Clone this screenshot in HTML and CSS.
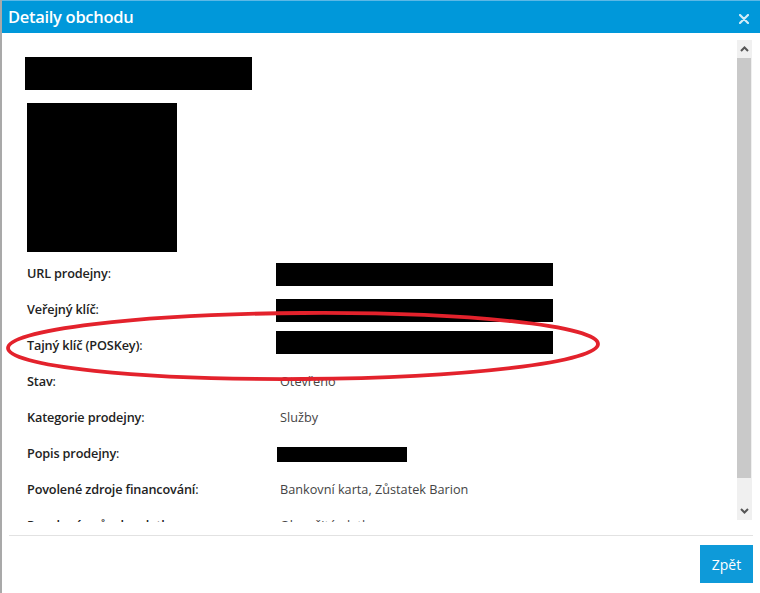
FILE: index.html
```html
<!DOCTYPE html>
<html lang="cs">
<head>
<meta charset="utf-8">
<title>Detaily obchodu</title>
<link rel="stylesheet" href="styles.css">
</head>
<body>
<div class="dialog">
  <div class="header">
    <span class="title">Detaily obchodu</span>
    <svg class="close" width="10" height="10" viewBox="0 0 10 10"><path d="M1 1L9 9M9 1L1 9" stroke="#d4ecf8" stroke-width="2.2" stroke-linecap="round"/></svg>
  </div>
  <div class="body">
    <div class="content">
      <div class="redact name"></div>
      <div class="redact logo"></div>
      <div class="rows">
        <div class="label">URL prodejny<span class="colon">:</span></div>
        <div class="value"><div class="redact long"></div></div>
        <div class="label">Veřejný klíč<span class="colon">:</span></div>
        <div class="value"><div class="redact long"></div></div>
        <div class="label">Tajný klíč (POSKey)<span class="colon">:</span></div>
        <div class="value"><div class="redact long up"></div></div>
        <div class="label">Stav<span class="colon">:</span></div>
        <div class="value">Otevřeno</div>
        <div class="label">Kategorie prodejny<span class="colon">:</span></div>
        <div class="value">Služby</div>
        <div class="label">Popis prodejny<span class="colon">:</span></div>
        <div class="value"><div class="redact short"></div></div>
        <div class="label">Povolené zdroje financování<span class="colon">:</span></div>
        <div class="value">Bankovní karta, Zůstatek Barion</div>
        <div class="label">Povolené způsoby platby<span class="colon">:</span></div>
        <div class="value">Okamžitá platba</div>
      </div>
      <svg class="mark" width="610" height="80" viewBox="0 0 610 80"><ellipse cx="298" cy="40" rx="295" ry="33" fill="none" stroke="#e3222c" stroke-width="3.8" transform="rotate(-0.4 298 40)"/></svg>
    </div>
    <div class="scrollbar">
      <div class="arrow"><svg width="9" height="6" viewBox="0 0 9 6"><path d="M1 5L4.5 1.5L8 5" fill="none" stroke="#555" stroke-width="2"/></svg></div>
      <div class="thumb"></div>
      <div class="track"></div>
      <div class="arrow"><svg width="9" height="6" viewBox="0 0 9 6"><path d="M1 1L4.5 4.5L8 1" fill="none" stroke="#555" stroke-width="2"/></svg></div>
    </div>
  </div>
  <div class="footer">
    <button class="btn">Zpět</button>
  </div>
</div>
</body>
</html>
```
FILE: styles.css
```css
html, body {
  margin: 0;
  padding: 0;
  background: #fff;
}
body {
  font-family: "Open Sans", "Liberation Sans", sans-serif;
  width: 760px;
  height: 593px;
  overflow: hidden;
}
.dialog {
  height: 593px;
  border-left: 2px solid #a9a9a9;
  box-sizing: border-box;
  display: flex;
  flex-direction: column;
}
.header {
  height: 33px;
  flex: none;
  background: #0098da;
  border-top: 1px solid #5cb8e6;
  box-sizing: border-box;
  display: flex;
  align-items: center;
  justify-content: space-between;
  padding: 0 11px 0 6px;
}
.title {
  color: #fff;
  font-size: 16.5px;
  font-weight: 600;
  letter-spacing: -0.3px;
  margin-top: -2px;
}
.close {
  margin-top: 4px;
}
.body {
  height: 489px;
  flex: none;
  display: flex;
  overflow: hidden;
}
.content {
  flex: 1;
  position: relative;
  padding: 24px 0 0 23px;
  overflow: hidden;
}
.redact {
  background: #000;
}
.name {
  width: 227px;
  height: 33px;
}
.logo {
  width: 150px;
  height: 149px;
  margin: 13px 0 0 2px;
}
.rows {
  display: grid;
  grid-template-columns: 249px 1fr;
  grid-auto-rows: 36px;
  margin: 3px 0 0 2px;
  font-size: 12.7px;
}
.label, .value {
  display: flex;
  align-items: center;
}
.label {
  color: #222;
  font-weight: 600;
  letter-spacing: -0.15px;
}
.colon {
  font-weight: 400;
}
.value {
  color: #444;
  padding-left: 4px;
}
.long {
  width: 277px;
  height: 23px;
  margin-left: -4px;
  margin-top: 2px;
}
.long.up {
  margin-top: -6px;
}
.short {
  width: 130px;
  height: 15px;
  margin-left: -3px;
  margin-top: 3px;
}
.mark {
  position: absolute;
  left: 3px;
  top: 273px;
}
.scrollbar {
  width: 15px;
  flex: none;
  margin: 7px 8px 0 0;
  height: 480px;
  display: flex;
  flex-direction: column;
  background: #f0f0f0;
}
.arrow {
  height: 18px;
  flex: none;
  display: flex;
  align-items: center;
  justify-content: center;
  background: #f0f0f0;
}
.thumb {
  height: 420px;
  background: #c9c9c9;
  margin: 0 1px 0 0;
}
.track {
  flex: 1;
}
.footer {
  flex: none;
  margin: 13px 7px 0 7px;
  border-top: 1px solid #e2e2e2;
  padding-top: 9px;
  display: flex;
  justify-content: flex-end;
}
.btn {
  width: 53px;
  height: 38px;
  background: #0e9ad9;
  border: none;
  color: #fff;
  font-family: "Open Sans", "Liberation Sans", sans-serif;
  font-size: 14px;
  padding: 0;
}
```
